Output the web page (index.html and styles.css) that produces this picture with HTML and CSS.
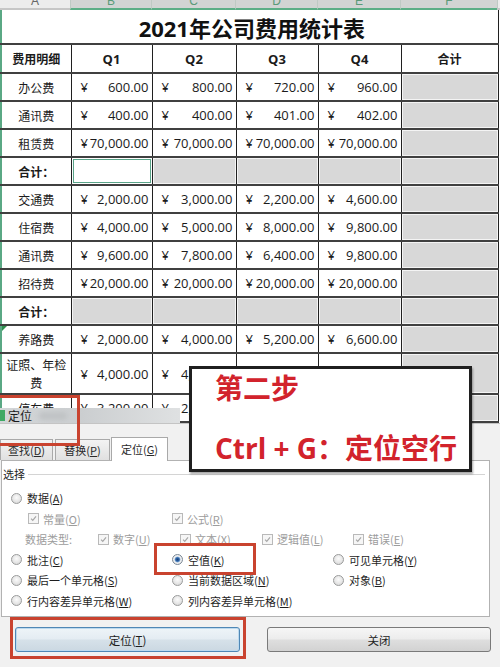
FILE: index.html
```html
<!DOCTYPE html>
<html lang="zh">
<head>
<meta charset="utf-8">
<title>2021年公司费用统计表</title>
<link rel="stylesheet" href="styles.css">
</head>
<body>
<div class="screen">
  <div class="colhead">
    <div class="ch cha w-a"><span>A</span></div>
    <div class="ch w-b"><span>B</span></div>
    <div class="ch w-c"><span>C</span></div>
    <div class="ch w-d"><span>D</span></div>
    <div class="ch w-e"><span>E</span></div>
    <div class="ch w-f"><span>F</span></div>
    <div class="ch chx"></div>
  </div>
  <table class="sheet">
    <colgroup><col class="w-a"><col class="w-b"><col class="w-c"><col class="w-d"><col class="w-e"><col class="w-f"></colgroup>
    <tr class="r-title"><td colspan="6" class="title">2021年公司费用统计表</td></tr>
    <tr class="r-head"><td class="lbl b">费用明细</td><td class="b q">Q1</td><td class="b q">Q2</td><td class="b q">Q3</td><td class="b q">Q4</td><td class="b">合计</td></tr>
    <tr><td class="lbl">办公费</td><td><div class="v"><span>¥</span><span>600.00</span></div></td><td><div class="v"><span>¥</span><span>800.00</span></div></td><td><div class="v"><span>¥</span><span>720.00</span></div></td><td><div class="v"><span>¥</span><span>960.00</span></div></td><td class="g"></td></tr>
    <tr><td class="lbl">通讯费</td><td><div class="v"><span>¥</span><span>400.00</span></div></td><td><div class="v"><span>¥</span><span>400.00</span></div></td><td><div class="v"><span>¥</span><span>401.00</span></div></td><td><div class="v"><span>¥</span><span>402.00</span></div></td><td class="g"></td></tr>
    <tr><td class="lbl">租赁费</td><td><div class="v"><span>¥</span><span>70,000.00</span></div></td><td><div class="v"><span>¥</span><span>70,000.00</span></div></td><td><div class="v"><span>¥</span><span>70,000.00</span></div></td><td><div class="v"><span>¥</span><span>70,000.00</span></div></td><td class="g"></td></tr>
    <tr><td class="lbl b">合计：</td><td class="sel"></td><td class="g"></td><td class="g"></td><td class="g"></td><td class="g"></td></tr>
    <tr><td class="lbl">交通费</td><td><div class="v"><span>¥</span><span>2,000.00</span></div></td><td><div class="v"><span>¥</span><span>3,000.00</span></div></td><td><div class="v"><span>¥</span><span>2,200.00</span></div></td><td><div class="v"><span>¥</span><span>4,600.00</span></div></td><td class="g"></td></tr>
    <tr><td class="lbl">住宿费</td><td><div class="v"><span>¥</span><span>4,000.00</span></div></td><td><div class="v"><span>¥</span><span>5,000.00</span></div></td><td><div class="v"><span>¥</span><span>8,000.00</span></div></td><td><div class="v"><span>¥</span><span>9,800.00</span></div></td><td class="g"></td></tr>
    <tr><td class="lbl">通讯费</td><td><div class="v"><span>¥</span><span>9,600.00</span></div></td><td><div class="v"><span>¥</span><span>7,800.00</span></div></td><td><div class="v"><span>¥</span><span>6,400.00</span></div></td><td><div class="v"><span>¥</span><span>9,800.00</span></div></td><td class="g"></td></tr>
    <tr><td class="lbl">招待费</td><td><div class="v"><span>¥</span><span>20,000.00</span></div></td><td><div class="v"><span>¥</span><span>20,000.00</span></div></td><td><div class="v"><span>¥</span><span>20,000.00</span></div></td><td><div class="v"><span>¥</span><span>20,000.00</span></div></td><td class="g"></td></tr>
    <tr><td class="lbl b">合计：</td><td class="g"></td><td class="g"></td><td class="g"></td><td class="g"></td><td class="g"></td></tr>
    <tr><td class="lbl mark">养路费</td><td><div class="v"><span>¥</span><span>2,000.00</span></div></td><td><div class="v"><span>¥</span><span>4,000.00</span></div></td><td><div class="v"><span>¥</span><span>5,200.00</span></div></td><td><div class="v"><span>¥</span><span>6,600.00</span></div></td><td class="g"></td></tr>
    <tr class="r-tall"><td class="lbl wrap">证照、年检费</td><td><div class="v"><span>¥</span><span>4,000.00</span></div></td><td><div class="v"><span>¥</span><span>4,000.00</span></div></td><td></td><td></td><td class="g"></td></tr>
    <tr><td class="lbl">停车费</td><td><div class="v"><span>¥</span><span>3,200.00</span></div></td><td><div class="v"><span>¥</span><span>2,800.00</span></div></td><td></td><td></td><td class="g"></td></tr>
  </table>

  <div class="dialog">
    <div class="titlebar"><span class="ticon"></span><span class="ttext">定位</span><span class="tblur"></span></div>
    <div class="dbody">
      <div class="tabs">
        <div class="tab tab1">查找(<u>D</u>)</div>
        <div class="tab tab2">替换(<u>P</u>)</div>
        <div class="tab tab3">定位(<u>G</u>)</div>
      </div>
      <div class="panel">
        <div class="legend"><span>选择</span><span class="gline"></span></div>
        <div class="orow r1">
          <div class="opt"><span class="radio"></span><span>数据(<u>A</u>)</span></div>
        </div>
        <div class="orow r2 dis">
          <div class="opt cbo w144"><span class="cb"><svg viewBox="0 0 11 11"><path d="M2.5 5.6 L4.6 7.8 L8.6 2.8" /></svg></span><span>常量(<u>O</u>)</span></div>
          <div class="opt cbo"><span class="cb"><svg viewBox="0 0 11 11"><path d="M2.5 5.6 L4.6 7.8 L8.6 2.8" /></svg></span><span>公式(<u>R</u>)</span></div>
        </div>
        <div class="orow r3 dis">
          <div class="opt w73">数据类型:</div>
          <div class="opt cbo w82"><span class="cb"><svg viewBox="0 0 11 11"><path d="M2.5 5.6 L4.6 7.8 L8.6 2.8" /></svg></span><span>数字(<u>U</u>)</span></div>
          <div class="opt cbo w82"><span class="cb"><svg viewBox="0 0 11 11"><path d="M2.5 5.6 L4.6 7.8 L8.6 2.8" /></svg></span><span>文本(<u>X</u>)</span></div>
          <div class="opt cbo w91"><span class="cb"><svg viewBox="0 0 11 11"><path d="M2.5 5.6 L4.6 7.8 L8.6 2.8" /></svg></span><span>逻辑值(<u>L</u>)</span></div>
          <div class="opt cbo"><span class="cb"><svg viewBox="0 0 11 11"><path d="M2.5 5.6 L4.6 7.8 L8.6 2.8" /></svg></span><span>错误(<u>E</u>)</span></div>
        </div>
        <div class="orow r4">
          <div class="opt w161"><span class="radio"></span><span>批注(<u>C</u>)</span></div>
          <div class="opt w161"><span class="radio on"></span><span>空值(<u>K</u>)</span></div>
          <div class="opt"><span class="radio"></span><span>可见单元格(<u>Y</u>)</span></div>
        </div>
        <div class="orow r4">
          <div class="opt w161"><span class="radio"></span><span>最后一个单元格(<u>S</u>)</span></div>
          <div class="opt w161"><span class="radio"></span><span>当前数据区域(<u>N</u>)</span></div>
          <div class="opt"><span class="radio"></span><span>对象(<u>B</u>)</span></div>
        </div>
        <div class="orow r4">
          <div class="opt w161"><span class="radio"></span><span>行内容差异单元格(<u>W</u>)</span></div>
          <div class="opt w161"><span class="radio"></span><span>列内容差异单元格(<u>M</u>)</span></div>
        </div>
      </div>
      <div class="btns">
        <div class="btn btn-go">定位(<u>T</u>)</div>
        <div class="btn btn-close">关闭</div>
      </div>
    </div>
  </div>

  <div class="callout">
    <div class="cline">第二步</div>
    <div class="cline c2">Ctrl + G：定位空行</div>
  </div>

  <div class="redbox rb1"></div>
  <div class="redbox rb2"></div>
  <div class="redbox rb3"></div>
</div>
</body>
</html>
```

FILE: styles.css
```css
* { box-sizing: border-box; }
html, body { margin: 0; padding: 0; }
body {
  width: 500px;
  height: 667px;
  overflow: hidden;
  background: #fff;
  font-family: "Open Sans", "Noto Sans CJK SC", sans-serif;
  color: #1b1b1b;
}
.screen { position: relative; width: 500px; height: 667px; overflow: hidden; }

/* column header strip */
.colhead { display: flex; height: 10px; overflow: hidden; }
.ch {
  flex: none;
  height: 10px;
  background: #d2d4d3;
  border-bottom: 2px solid #5cae86;
  border-left: 1px solid #bfcac4;
  display: flex;
  justify-content: center;
  align-items: flex-start;
  overflow: hidden;
  font-family: "Liberation Sans", sans-serif;
  font-size: 12px;
  color: #5a9a78;
}
.ch span { display: block; line-height: 12px; margin-top: -5px; }
.cha { background: #ececec; border-bottom-color: #c6c6c6; color: #666; border-left: none; }
.chx { flex: 1; background: #ececec; border-bottom-color: #c6c6c6; }
.w-a { width: 70px; }
.w-b { width: 81px; }
.w-c { width: 84px; }
.w-d { width: 82px; }
.w-e { width: 83px; }
.w-f { width: 97px; }

/* sheet */
.sheet { border-collapse: collapse; table-layout: fixed; width: 497px; }
.sheet td {
  border-left: 1px solid #202020;
  border-right: 1px solid #202020;
  border-top: 2px solid #404040;
  border-bottom: 2px solid #404040;
  padding: 0;
  height: 28px;
  font-size: 12px;
  text-align: center;
  vertical-align: middle;
  font-family: "Noto Sans CJK SC", sans-serif;
}
.sheet td.lbl { border-left: 2px solid #5aa884; }
.r-title td.title {
  height: 34px;
  border-top: none;
  border-left: 2px solid #5aa884;
  font-family: "Open Sans", "Noto Sans CJK SC", sans-serif;
  font-size: 22px;
  font-weight: 700;
  color: #111;
  padding-left: 4px;
}
.r-head td { height: 29px; }
.sheet td.b { font-weight: 700; }
.sheet td.q { font-family: "Open Sans", sans-serif; font-size: 13px; }
.r-tall td { height: 41px; }
.sheet td.wrap { padding: 0 2px; line-height: 18px; }
.v {
  display: flex;
  justify-content: space-between;
  padding: 0 3px 0 9px;
  font-family: "Open Sans", sans-serif;
  font-size: 13px;
  color: #1b1b1b;
}
.sheet td.g { background: #d8d8d8; box-shadow: inset 0 0 0 1px #f4f4f4; }
.sheet td.sel { background: #fff; box-shadow: inset 0 0 0 1px #fff, inset 0 0 0 2px #5aa58a; }
.sheet td.mark { position: relative; }
.sheet td.mark::before {
  content: "";
  position: absolute;
  left: 0;
  top: 0;
  border-top: 5px solid #2f8f4e;
  border-right: 5px solid transparent;
}

/* dialog */
.dialog {
  position: absolute;
  left: 0;
  top: 408px;
  width: 500px;
  height: 259px;
  display: flex;
  flex-direction: column;
  font-family: "Noto Sans CJK SC", sans-serif;
  font-size: 11px;
  color: #1e1e1e;
}
.titlebar {
  width: 180px;
  height: 15px;
  display: flex;
  align-items: center;
  gap: 3px;
  background: linear-gradient(90deg, #d3d6d8 0%, #cbced0 45%, #dfe1e2 100%);
  font-size: 12px;
}
.ticon { width: 5px; height: 11px; background: #3fa965; }
.ttext { color: #1a1a1a; }
.tblur { width: 28px; height: 8px; margin-left: 4px; background: #c0c3c5; border-radius: 4px; filter: blur(2px); }
.dbody {
  flex: 1;
  background: #f1f1f1;
  border-top: 1px solid #c4c4c4;
  padding-top: 13px;
}
.tabs { display: flex; align-items: flex-end; height: 23px; }
.tab {
  height: 21px;
  border: 1px solid #a9a9a9;
  border-bottom: none;
  background: linear-gradient(#f3f3f3, #e0e0e0);
  display: flex;
  align-items: center;
  justify-content: center;
  color: #2a2a2a;
}
.tab1 { width: 53px; }
.tab2 { width: 55px; margin-left: 2px; }
.tab3 {
  width: 57px;
  height: 24px;
  margin-left: 1px;
  margin-bottom: -1px;
  background: #fff;
  position: relative;
  z-index: 1;
  padding-bottom: 2px;
}
.panel {
  margin: 0 10px 0 1px;
  height: 157px;
  background: #fff;
  border: 1px solid #b2b2b2;
  padding: 5px 0 0 1px;
}
.legend { display: flex; align-items: center; height: 16px; padding-left: 0; }
.gline { flex: 1; border-top: 1px solid #d4d4d4; margin: 1px 4px 0 3px; }
.orow { display: flex; align-items: center; height: 20.5px; }
.legend + .orow { margin-top: 6px; }
.r1 { padding-left: 8px; }
.r2 { padding-left: 25px; }
.r3 { padding-left: 22px; }
.r4 { padding-left: 8px; }
.opt { flex: none; display: flex; align-items: center; gap: 5px; white-space: nowrap; }
.cbo { gap: 4px; }
.w73 { width: 73px; }
.w82 { width: 82px; }
.w91 { width: 91px; }
.w144 { width: 144px; }
.w161 { width: 161px; }
.dis { color: #9c9c9c; }
.radio {
  width: 11px;
  height: 11px;
  border-radius: 50%;
  border: 1px solid #9a9b9b;
  background: radial-gradient(circle at 50% 40%, #fbfbfb 0%, #e6e6e6 55%, #cfcfcf 100%);
  flex: none;
}
.radio.on {
  background: radial-gradient(circle, #173f78 0%, #2d64a8 28%, #7ea7d4 40%, #f3f3f3 52%, #dcdcdc 100%);
  border-color: #7a8896;
}
.cb {
  width: 11px;
  height: 11px;
  border: 1px solid #b9b9b9;
  background: #f6f6f6;
  flex: none;
  display: flex;
}
.cb svg { width: 9px; height: 9px; }
.cb path { fill: none; stroke: #a6a6a6; stroke-width: 1.4; }
.btns { display: flex; margin-top: 10px; padding-left: 15px; gap: 27px; }
.btn {
  width: 225px;
  height: 25px;
  border: 1px solid #7a7a7a;
  border-radius: 3px;
  background: linear-gradient(#f6f6f6 0%, #ececec 48%, #dedede 52%, #d2d2d2 100%);
  display: flex;
  align-items: center;
  justify-content: center;
  font-size: 11.5px;
  color: #1e1e1e;
}
.btn-go {
  border-color: #4f87b5;
  background: linear-gradient(#eef4f8 0%, #e4ecf2 48%, #d6e1e9 52%, #cbd8e2 100%);
  box-shadow: inset 0 0 0 1px #bcd9ee;
}
.btn-close { width: 224px; }

/* callout */
.callout {
  position: absolute;
  left: 189px;
  top: 366px;
  width: 283px;
  height: 106px;
  background: #fff;
  border: 3px solid #1f1f1f;
  box-shadow: 1px 2px 2px rgba(0,0,0,0.35);
  padding: 0 0 0 23px;
  font-family: "Open Sans", "Noto Sans CJK SC", sans-serif;
  font-weight: 700;
  font-size: 28px;
  color: #d2232c;
}
.cline { height: 38px; line-height: 38px; white-space: nowrap; }
.c2 { margin-top: 22px; }

/* red highlight frames */
.redbox { position: absolute; border: 3px solid #c9432f; }
.rb1 { left: -3px; top: 395px; width: 83px; height: 51px; }
.rb2 { left: 154px; top: 543px; width: 102px; height: 32px; }
.rb3 { left: 10px; top: 617px; width: 236px; height: 42px; }
```
